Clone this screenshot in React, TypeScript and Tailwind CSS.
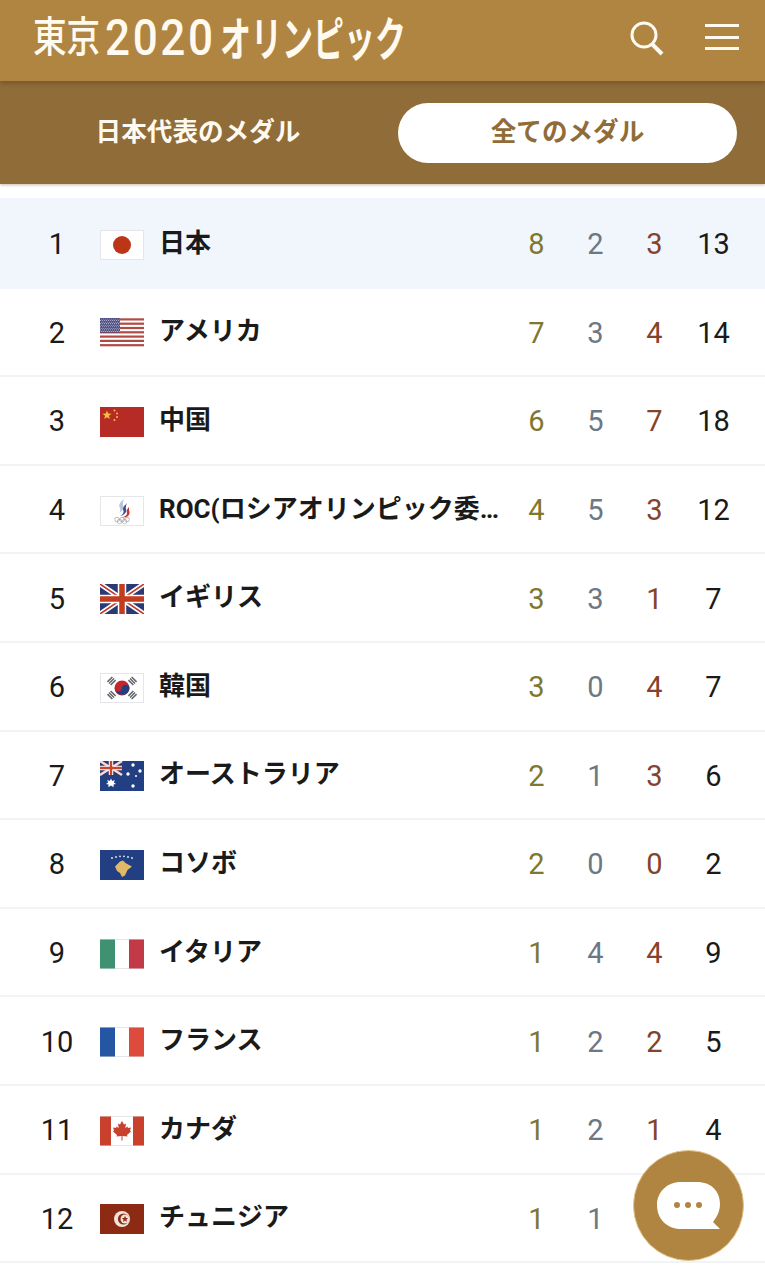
import React from "react";

const Border = () => <rect x="0.5" y="0.5" width="43" height="29" fill="none" stroke="#e4e6ea" />;

const flags: Record<string, React.ReactNode> = {
  jp: (<><rect width="44" height="30" fill="#fff" /><Border /><circle cx="22" cy="15" r="9" fill="#bc3517" /></>),
  us: (
    <>
      <rect width="44" height="30" fill="#fff" />
      {Array.from({ length: 7 }).map((_, i) => (
        <rect key={i} y={i * 4.3 + 0.3} width="44" height="2.2" fill="#b04a45" />
      ))}
      <rect width="20" height="14.5" fill="#3d3f78" />
      {Array.from({ length: 9 }).map((_, r) =>
        Array.from({ length: 10 }).map((_, c) => (
          <circle key={`${r}-${c}`} cx={1.2 + c * 2 - (r % 2) * 0.5} cy={1 + r * 1.55} r="0.55" fill="#d5d6e6" />
        ))
      )}
    </>
  ),
  cn: (
    <>
      <rect width="44" height="30" fill="#b72b26" />
      <polygon points="7,3.5 8.2,6.6 11.5,6.8 8.9,8.8 9.8,12 7,10.2 4.2,12 5.1,8.8 2.5,6.8 5.8,6.6" fill="#f3c23d" />
      <circle cx="14.5" cy="3.5" r="1" fill="#f3c23d" />
      <circle cx="17" cy="6.5" r="1" fill="#f3c23d" />
      <circle cx="17" cy="10" r="1" fill="#f3c23d" />
      <circle cx="14.5" cy="13" r="1" fill="#f3c23d" />
    </>
  ),
  roc: (
    <>
      <rect width="44" height="30" fill="#fff" />
      <Border />
      <path d="M24 3 C20 6 18 9 20 12 C21 14 20 16 19 17 C23 15 24 12 23 9 C22.5 7 23 5 24 3Z" fill="#b5c3dd" />
      <path d="M27 7 C24 10 22 12 23.5 15 C24 17 22 19 20 20 C25 19 27 16 26 13 C25.5 11 26 9 27 7Z" fill="#3b4f9c" />
      <path d="M29 11 C27 13 26 15 27 17 C27.5 19 24 21 22 21 C27 22 30 19 29.5 16 C29 14 29 13 29 11Z" fill="#c8352f" />
      {[17, 22, 27].map((x) => <circle key={x} cx={x} cy="23.5" r="2.3" fill="none" stroke="#8d8d8d" strokeWidth="0.6" />)}
      {[19.5, 24.5].map((x) => <circle key={x} cx={x} cy="25.5" r="2.3" fill="none" stroke="#a0a0a0" strokeWidth="0.6" />)}
    </>
  ),
  gb: (
    <>
      <rect width="44" height="30" fill="#2a3a72" />
      <path d="M0 0L44 30M44 0L0 30" stroke="#fff" strokeWidth="5" />
      <path d="M0 0L44 30M44 0L0 30" stroke="#c0392b" strokeWidth="1.6" />
      <path d="M22 0V30M0 15H44" stroke="#fff" strokeWidth="8.5" />
      <path d="M22 0V30M0 15H44" stroke="#c43c1f" strokeWidth="5.5" />
    </>
  ),
  kr: (
    <>
      <rect width="44" height="30" fill="#fff" />
      <Border />
      <circle cx="22" cy="15" r="7.5" fill="#c2272d" />
      <path d="M14.6 14 A3.7 3.7 0 0 0 22 15 A3.7 3.7 0 0 1 29.4 16 A7.5 7.5 0 0 1 14.6 14Z" fill="#233f84" />
      {[[11.5, 8, -45], [32.5, 8, 45], [11.5, 22, 45], [32.5, 22, -45]].map(([x, y, a], i) => (
        <g key={i} transform={`translate(${x} ${y}) rotate(${a})`} fill="#63666a">
          <rect x="-3.5" y="-3" width="7" height="1.5" />
          <rect x="-3.5" y="-0.75" width="7" height="1.5" />
          <rect x="-3.5" y="1.5" width="7" height="1.5" />
        </g>
      ))}
    </>
  ),
  au: (
    <>
      <rect width="44" height="30" fill="#233f84" />
      <g>
        <rect width="22" height="14" fill="#2a3a72" />
        <path d="M0 0L22 14M22 0L0 14" stroke="#f6d9d6" strokeWidth="2.5" />
        <path d="M11 0V14M0 7H22" stroke="#fff" strokeWidth="4.5" />
        <path d="M11 0V14M0 7H22" stroke="#c8452f" strokeWidth="2.4" />
      </g>
      <polygon points="11,17.5 12.2,20 14.8,19 13.9,21.5 16,23 13.5,23.5 13.6,26.2 11,24.5 8.4,26.2 8.5,23.5 6,23 8.1,21.5 7.2,19 9.8,20" fill="#fff" />
      <circle cx="33" cy="4" r="1.7" fill="#fff" />
      <circle cx="40" cy="10" r="1.7" fill="#fff" />
      <circle cx="28" cy="13" r="1.7" fill="#fff" />
      <circle cx="36" cy="15" r="1" fill="#fff" />
      <circle cx="33" cy="25" r="1.7" fill="#fff" />
    </>
  ),
  xk: (
    <>
      <rect width="44" height="30" fill="#233f84" />
      <path d="M15 16.5 L20 11.5 L23 10.5 L25.5 13 L29 15 L32 16.5 L27.5 20 L25 25.5 L22 27 L20 23 L17 21Z" fill="#e2b765" />
      {[[12, 8], [16, 7], [20, 6.3], [24, 6.3], [28, 7], [32, 8]].map(([x, y], i) => (
        <circle key={i} cx={x} cy={y} r="0.9" fill="#e9edf5" />
      ))}
    </>
  ),
  it: (<><rect width="44" height="30" fill="#fff" /><Border /><rect width="15" height="29" y="0.5" fill="#3f9271" /><rect x="29" y="0.5" width="15" height="29" fill="#c23a46" /></>),
  fr: (<><rect width="44" height="30" fill="#fff" /><Border /><rect width="15" height="29" y="0.5" fill="#2556a4" /><rect x="29" y="0.5" width="15" height="29" fill="#dc4b3c" /></>),
  ca: (
    <>
      <rect width="44" height="30" fill="#fff" />
      <Border />
      <rect width="11" height="29" y="0.5" fill="#c9402c" />
      <rect x="33" y="0.5" width="11" height="29" fill="#c9402c" />
      <path d="M22 5 L24 8.5 L26 7.5 L25.3 12 L27.5 10.5 L28 12 L31 11.5 L30 14.5 L31 15.5 L27 19 L27.5 20.5 L22.5 20 V24.5 H21.5 V20 L16.5 20.5 L17 19 L13 15.5 L14 14.5 L13 11.5 L16 12 L16.5 10.5 L18.7 12 L18 7.5 L20 8.5Z" fill="#c9402c" />
    </>
  ),
  tn: (
    <>
      <rect width="44" height="30" fill="#8c2a14" />
      <circle cx="22" cy="15" r="8" fill="#f1e4dc" />
      <circle cx="23.5" cy="15" r="5.6" fill="#8c2a14" />
      <circle cx="25" cy="15" r="4.5" fill="#f1e4dc" />
      <polygon points="25,11.8 25.9,14 28.2,14.1 26.4,15.6 27,17.9 25,16.6 23,17.9 23.6,15.6 21.8,14.1 24.1,14" fill="#8c2a14" />
    </>
  ),
};

const rows = [
  ["1", "jp", "日本", 8, 2, 3, 13],
  ["2", "us", "アメリカ", 7, 3, 4, 14],
  ["3", "cn", "中国", 6, 5, 7, 18],
  ["4", "roc", "ROC(ロシアオリンピック委…", 4, 5, 3, 12],
  ["5", "gb", "イギリス", 3, 3, 1, 7],
  ["6", "kr", "韓国", 3, 0, 4, 7],
  ["7", "au", "オーストラリア", 2, 1, 3, 6],
  ["8", "xk", "コソボ", 2, 0, 0, 2],
  ["9", "it", "イタリア", 1, 4, 4, 9],
  ["10", "fr", "フランス", 1, 2, 2, 5],
  ["11", "ca", "カナダ", 1, 2, 1, 4],
  ["12", "tn", "チュニジア", 1, 1, 0, 2],
] as const;

const jp = "font-['Noto_Sans_CJK_JP','Noto_Sans',sans-serif]";
const mix = "font-['Roboto','Noto_Sans_CJK_JP',sans-serif]";
const num = "font-['Roboto','Liberation_Sans',sans-serif]";

export default function App() {
  return (
    <div className={`relative h-[1280px] w-[765px] overflow-hidden bg-white ${jp}`}>
      <header className="relative z-10 flex h-[81px] items-center justify-between bg-[#b08542] pl-[33px] pr-[26px] shadow-[0_2px_4px_rgba(70,45,10,0.35)]">
        <div className="flex h-[76px] items-center whitespace-nowrap leading-none text-[#fffaf0]">
          <span className="mb-[13px] w-[72px] origin-left scale-x-[0.8] text-[42px] font-medium">東京</span>
          <span className={`mb-[5px] w-[115px] origin-left scale-x-[0.88] text-[50px] font-medium tracking-[3px] ${num}`}>2020</span>
          <span className="mb-[11px] w-[190px] origin-left scale-x-[0.66] text-[47px] font-bold">オリンピック</span>
        </div>
        <div className="flex items-center gap-[40px]">
          <svg width="36" height="36" viewBox="0 0 36 36" fill="none" stroke="#fffaf0" className="mb-[6px]">
            <circle cx="15" cy="15" r="12" strokeWidth="3" />
            <path d="M23 24 L33 34" strokeWidth="4" />
          </svg>
          <div className="mb-[7px] flex w-[34px] flex-col gap-[8.5px]">
            <div className="h-[3px] bg-[#fffaf0]" />
            <div className="h-[3px] bg-[#fffaf0]" />
            <div className="h-[3px] bg-[#fffaf0]" />
          </div>
        </div>
      </header>

      <nav className="flex h-[103px] items-center justify-between bg-[#8f6c38] pr-[28px] text-[25.6px] font-bold shadow-[0_1px_3px_rgba(90,60,20,0.35)]">
        <div className="flex h-[60px] w-[396px] items-center justify-center pb-[5px] text-[#fffaf0]">日本代表のメダル</div>
        <div className="flex h-[60px] w-[339px] items-center justify-center rounded-[30px] bg-white pb-[5px] text-[#8f6c38]">全てのメダル</div>
      </nav>

      <div className="mt-[14px]">
        {rows.map(([rank, flag, name, g, s, b, t], i) => (
          <div
            key={rank}
            className={
              i === 0
                ? "flex h-[90.6px] items-center bg-[#f1f6fd] pr-[21px] pt-[3px]"
                : "flex h-[88.6px] items-center border-b-2 border-[#f2f3f5] pr-[21px] pt-[3px]"
            }
          >
            <div className={`w-[100px] pl-[14px] text-center text-[29px] leading-none text-[#1a1a1a] ${num}`}>
              <span className="block w-[86px]">{rank}</span>
            </div>
            <svg width="44" height="30" viewBox="0 0 44 30" className="shrink-0">
              {flags[flag]}
            </svg>
            <div className={`mb-[3px] ml-[15px] w-[338px] whitespace-nowrap text-[26px] font-bold leading-normal text-[#1a1a1a] ${mix}`}>
              {name}
            </div>
            <div className={`ml-[10px] flex flex-1 text-center text-[29px] leading-none ${num}`}>
              <span className="w-[59px] text-[#80772f]">{g}</span>
              <span className="w-[59px] text-[#6c7884]">{s}</span>
              <span className="w-[59px] text-[#84442c]">{b}</span>
              <span className="w-[59px] text-[#1a1a1a]">{t}</span>
            </div>
          </div>
        ))}
      </div>

      <button className="absolute left-[633px] top-[1150px] z-20 flex h-[111px] w-[111px] items-center justify-center rounded-full border border-[#e3c78f] bg-[#b08542]">
        <svg width="63" height="47" viewBox="0 0 63 47">
          <path d="M24 0 H40 C54 0 63 9 63 22 C63 29 60 35 56 40 L63 47 H24 C10 47 0 37 0 23 C0 10 10 0 24 0Z" fill="#fff" />
          <circle cx="20" cy="23" r="3" fill="#b08542" />
          <circle cx="31" cy="23" r="3" fill="#b08542" />
          <circle cx="42" cy="23" r="3" fill="#b08542" />
        </svg>
      </button>
    </div>
  );
}
